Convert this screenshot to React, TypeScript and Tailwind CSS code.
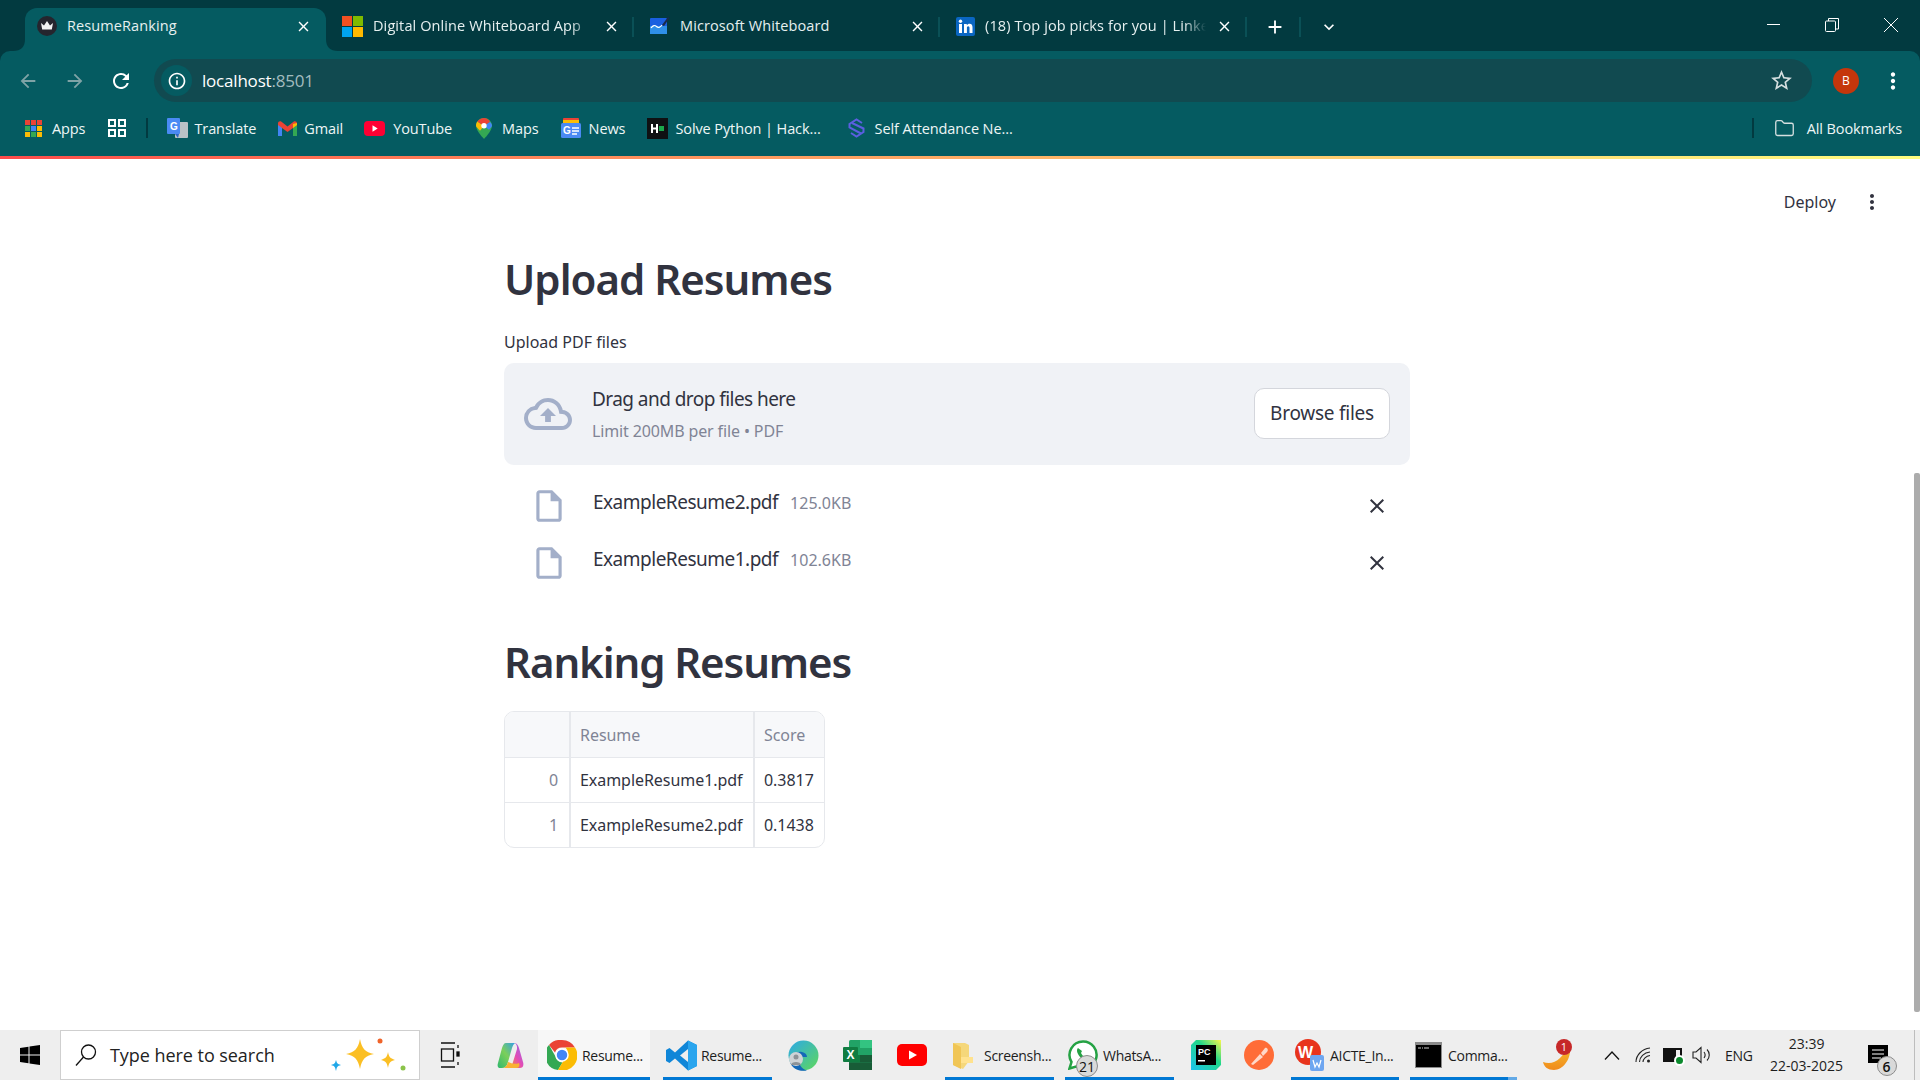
import React from "react";
import { MdArrowBack, MdArrowForward, MdRefresh, MdInfoOutline, MdStarBorder, MdMoreVert, MdClose, MdOutlineCloudUpload, MdOutlineInsertDriveFile, MdAdd, MdKeyboardArrowDown } from "react-icons/md";
import { Folder } from "lucide-react";

const UI = "font-['Open_Sans','Noto_Sans',sans-serif]";
const SS = "font-['Noto_Sans','Open_Sans',sans-serif]";

const Crown = () => (
  <svg width="20" height="20" viewBox="0 0 20 20" className="shrink-0">
    <circle cx="10" cy="10" r="10" fill="#25252e" />
    <path d="M4 7l3 2.500L10 5l3 4.500L16 7l-1.200 6.500H5.200z" fill="#f3f3f3" />
  </svg>
);
const MsLogo = () => (
  <svg width="21" height="21" viewBox="0 0 21 21" className="shrink-0">
    <rect width="10" height="10" fill="#f25022" />
    <rect x="11" width="10" height="10" fill="#7fba00" />
    <rect y="11" width="10" height="10" fill="#00a4ef" />
    <rect x="11" y="11" width="10" height="10" fill="#ffb900" />
  </svg>
);
const Whiteboard = () => (
  <svg width="20" height="20" viewBox="0 0 20 20" className="shrink-0">
    <rect y="2" width="17" height="16" rx="1" fill="#1a5fe0" />
    <rect y="10" width="17" height="8" fill="#2f8fe8" />
    <path d="M1 12c2-3 4-3 5.500-1.500S10 12 12 9" stroke="#fff" strokeWidth="1.200" fill="none" />
    <path d="M12 9l6-8 1.500 1-5.500 8z" fill="#1b2a4a" />
  </svg>
);
const LinkedIn = () => (
  <svg width="19" height="19" viewBox="0 0 19 19" className="shrink-0">
    <rect width="19" height="19" rx="2" fill="#0a66c2" />
    <rect x="3" y="7" width="3" height="9" fill="#fff" />
    <circle cx="4.500" cy="4.300" r="1.700" fill="#fff" />
    <path d="M8 7h2.800v1.300C11.400 7.400 12.400 6.800 13.500 6.800c2.300 0 3 1.500 3 3.600V16h-3v-5c0-1.100-.4-1.800-1.300-1.800-1 0-1.300.8-1.300 1.800v5H8z" fill="#fff" />
  </svg>
);

const Tab = ({ icon, title, fade, active, width }: { icon: React.ReactNode; title: string; fade?: boolean; active?: boolean; width?: string }) => (
  <div className={active ? "relative flex h-[43px] w-[301px] items-center rounded-t-[12px] bg-[#055b61] pb-[7px] pl-[12px] pr-[14px]" : `flex h-[43px] ${width} items-center pb-[7px] pl-[16px] pr-[12px]`}>
    {active && (
      <>
        <svg width="12" height="12" viewBox="0 0 12 12" className="absolute bottom-0 left-[-12px]"><path d="M12 0v12H0C8 12 12 8 12 0z" fill="#055b61" /></svg>
        <svg width="12" height="12" viewBox="0 0 12 12" className="absolute bottom-0 right-[-12px]"><path d="M0 0v12h12C4 12 0 8 0 0z" fill="#055b61" /></svg>
      </>
    )}
    {icon}
    <div className={fade ? "ml-[10px] flex-1 overflow-hidden whitespace-nowrap text-[14.500px] tracking-[0.1px] text-[#e6f0f0] [mask-image:linear-gradient(to_right,black_90%,transparent)]" : "ml-[10px] flex-1 overflow-hidden whitespace-nowrap text-[14.500px] tracking-[0.1px] text-[#e6f0f0]"}>{title}</div>
    <MdClose className="ml-[10px] shrink-0 text-white" size={17} />
  </div>
);

const Sep = () => <div className="h-[20px] w-[2px] shrink-0 bg-[#0a5056]" />;

const Bm = ({ children }: { children: React.ReactNode }) => <span className="whitespace-nowrap text-[14.500px] tracking-[-0.1px] text-[#eef6f6]">{children}</span>;

const TaskText = ({ children }: { children: React.ReactNode }) => <span className="whitespace-nowrap text-[14px] tracking-[-0.3px] text-[#1d1d1d]">{children}</span>;
const Under = ({ tail }: { tail?: boolean }) => (
  <div className="absolute bottom-0 left-0 right-0 flex h-[3px]">
    <div className="flex-1 bg-[#0078d4]" />
    {tail && <div className="w-[9px] bg-[#63a9e6]" />}
  </div>
);

export default function App() {
  return (
    <div className={`flex h-[1080px] w-[1920px] flex-col overflow-hidden bg-white ${UI}`}>
      {/* tab strip */}
      <div className="flex h-[51px] shrink-0 items-end bg-[#023a40] pl-[25px]">
        <Tab active icon={<Crown />} title="ResumeRanking" />
        <Tab fade width="w-[306px]" icon={<MsLogo />} title="Digital Online Whiteboard App" />
        <div className="mb-[14px]"><Sep /></div>
        <Tab width="w-[304px]" icon={<Whiteboard />} title="Microsoft Whiteboard" />
        <div className="mb-[14px]"><Sep /></div>
        <Tab fade width="w-[305px]" icon={<LinkedIn />} title="(18) Top job picks for you | LinkedIn" />
        <div className="mb-[14px]"><Sep /></div>
        <div className="mb-[14px] ml-[17px] flex h-[20px] items-center"><MdAdd className="text-white" size={22} /></div>
        <div className="mb-[14px] ml-[13px]"><Sep /></div>
        <div className="mb-[14px] ml-[18px] flex h-[20px] items-center"><MdKeyboardArrowDown className="text-white" size={20} /></div>
        <div className="mb-[26px] ml-[428px] h-[1px] w-[13px] bg-white" />
        <svg width="14" height="14" viewBox="0 0 14 14" className="mb-[19px] ml-[45px]" fill="none" stroke="#fff"><rect x="0.500" y="3" width="10" height="10.500" rx="1" /><path d="M3.500 3V0.500h10V11h-3" /></svg>
        <svg width="14" height="14" viewBox="0 0 14 14" className="mb-[19px] ml-[45px]" stroke="#fff"><path d="M0 0l14 14M14 0L0 14" /></svg>
      </div>

      {/* toolbar + bookmarks */}
      <div className="h-[105px] shrink-0 bg-[#023a40]">
        <div className="h-full rounded-t-[10px] bg-[#055b61]">
          <div className="flex pt-[8px]">
            <div className="flex h-[43px] items-center">
              <MdArrowBack className="ml-[17px] text-[#7fa3a6]" size={22} />
              <MdArrowForward className="ml-[25px] text-[#7fa3a6]" size={22} />
              <MdRefresh className="ml-[23px] text-white" size={24} />
              <div className="ml-[21px] flex h-[43px] w-[1658px] items-center rounded-full bg-[#114a50] pl-[7px] pr-[18px]">
                <div className="flex h-[31px] w-[31px] items-center justify-center rounded-full bg-[#055b61]">
                  <MdInfoOutline className="text-white" size={20} />
                </div>
                <span className="ml-[10px] text-[17px] tracking-[-0.2px] text-white">localhost<span className="text-[#a2bcbf]">:8501</span></span>
                <MdStarBorder className="ml-auto text-[#d5dfe0]" size={25} />
              </div>
              <div className="ml-[21px] flex h-[26px] w-[26px] items-center justify-center rounded-full bg-[#c5360b] text-[12px] text-white">B</div>
              <MdMoreVert className="ml-[21px] text-white" size={26} />
            </div>
          </div>
          <div className="mt-[1px] flex h-[50px] items-center pl-[25px] pr-[18px]">
            <svg width="17" height="17" viewBox="0 0 17 17" className="shrink-0">
              {[["#ea4335","#ea4335","#ea4335"],["#34a853","#4285f4","#fbbc04"],["#fbbc04","#34a853","#fbbc04"]].map((r, y) => r.map((c, x) => <rect key={`${x}${y}`} x={x * 6} y={y * 6} width="5" height="5" fill={c} />))}
            </svg>
            <div className="ml-[10px]"><Bm>Apps</Bm></div>
            <svg width="18" height="18" viewBox="0 0 18 18" className="ml-[23px] shrink-0" fill="none" stroke="#fff" strokeWidth="2"><rect x="1" y="1" width="6" height="6" /><rect x="11" y="1" width="6" height="6" /><rect x="1" y="11" width="6" height="6" /><rect x="11" y="11" width="6" height="6" /></svg>
            <div className="ml-[20px] h-[20px] w-[2px] bg-[#023a40]" />
            <svg width="21" height="21" viewBox="0 0 21 21" className="ml-[19px] shrink-0">
              <rect x="8" y="4" width="13" height="16" rx="1" fill="#b9c2c6" />
              <rect width="13" height="16" rx="1" fill="#4a8af4" />
              <path d="M8 16l3 4 1-4z" fill="#2f65c4" />
              <text x="3" y="12" fontSize="10" fontWeight="700" fill="#fff" fontFamily="Liberation Sans">G</text>
            </svg>
            <div className="ml-[6px]"><Bm>Translate</Bm></div>
            <svg width="19" height="15" viewBox="0 0 19 15" className="ml-[22px] shrink-0">
              <path d="M0 3v12h4V6z" fill="#4285f4" /><path d="M19 3v12h-4V6z" fill="#34a853" />
              <path d="M0 2.500C0 .5 2 -.3 3.500 .8L9.500 5.500 15.500 .8C17 -.3 19 .5 19 2.500V4l-4 3-5.500 4L4 7 0 4z" fill="#ea4335" />
              <path d="M15 3l4-1V4l-4 3z" fill="#fbbc04" />
            </svg>
            <div className="ml-[7px]"><Bm>Gmail</Bm></div>
            <svg width="21" height="15" viewBox="0 0 21 15" className="ml-[21px] shrink-0"><rect width="21" height="15" rx="4" fill="#ff0033" /><path d="M8.500 4.300l5.200 3.200-5.200 3.200z" fill="#fff" /></svg>
            <div className="ml-[8px]"><Bm>YouTube</Bm></div>
            <svg width="16" height="21" viewBox="0 0 16 21" className="ml-[24px] shrink-0">
              <path d="M8 0C3.600 0 0 3.400 0 7.800 0 13 8 21 8 21s8-8 8-13.200C16 3.400 12.400 0 8 0z" fill="#34a853" />
              <path d="M1.300 3.500L8 8 4 12.800C2 10.500 0 9 0 7.800 0 6 .5 4.700 1.300 3.500z" fill="#fbbc04" />
              <path d="M8 0C5.300 0 3 1.400 1.300 3.500L8 8l6-4C12.800 1.500 10.500 0 8 0z" fill="#ea4335" />
              <path d="M14 4L8 8l5 3.800c1.500-1.700 3-3 3-4C16 6.300 15.300 5 14 4z" fill="#4285f4" />
              <circle cx="8" cy="7.800" r="2.700" fill="#fff" />
            </svg>
            <div className="ml-[10px]"><Bm>Maps</Bm></div>
            <svg width="20" height="20" viewBox="0 0 20 20" className="ml-[22px] shrink-0">
              <rect x="2" y="0" width="16" height="6" rx="1" fill="#ea4335" /><rect x="2" y="2" width="16" height="6" fill="#fbbc04" />
              <rect y="5" width="20" height="15" rx="1.500" fill="#4a8af4" />
              <text x="2" y="16" fontSize="10" fontWeight="700" fill="#fff" fontFamily="Liberation Sans">G</text>
              <path d="M11 10h7M11 13h7M11 16h5" stroke="#fff" strokeWidth="1.300" />
            </svg>
            <div className="ml-[8px]"><Bm>News</Bm></div>
            <svg width="21" height="21" viewBox="0 0 21 21" className="ml-[22px] shrink-0">
              <rect width="21" height="21" fill="#0f1113" />
              <path d="M5 6v9M10 6v9M5 10.500h5" stroke="#fff" strokeWidth="2" />
              <rect x="12" y="8" width="5" height="5" fill="#1ba94c" />
            </svg>
            <div className="ml-[7px]"><Bm>Solve Python | Hack...</Bm></div>
            <svg width="17" height="20" viewBox="0 0 17 20" className="ml-[27px] shrink-0" fill="none" stroke="#5b5fe0" strokeWidth="2">
              <path d="M14 5L8.500 1.500 1.500 6v3.500L13 15.500" /><path d="M3 15l5.500 3.500 7-4.500v-3.500L4 5" />
            </svg>
            <div className="ml-[10px]"><Bm>Self Attendance Ne...</Bm></div>
            <div className="ml-auto h-[20px] w-[2px] bg-[#023a40]" />
            <Folder className="ml-[20px] shrink-0 text-[#d5dfe0]" size={21} strokeWidth={1.500} />
            <div className="ml-[12px]"><Bm>All Bookmarks</Bm></div>
          </div>
        </div>
      </div>
      <div className="h-[3px] shrink-0 bg-gradient-to-r from-[#ff4b4b] to-[#fffd80]" />

      {/* page */}
      <div className={`relative flex-1 ${SS} text-[#31333f]`}>
        <div className="absolute right-0 top-[314px] h-[539px] w-[6px] rounded-[2px] bg-[#acacac]" />
        <div className="flex h-[86px] items-start justify-end pr-[36px] pt-[31px]">
          <span className="text-[16px] leading-[24px] tracking-[0px]">Deploy</span>
          <MdMoreVert className="ml-[24px]" size={24} />
        </div>
        <div className="ml-[504px] w-[906px]">
          <h1 className="h-[68px] pt-[1px] text-[42px] font-semibold leading-[66px] tracking-[-1px]">Upload Resumes</h1>
          <div className="mt-[17px] h-[33px] text-[16px] leading-[24px] tracking-[0px]">Upload PDF files</div>
          <div className="flex h-[102px] items-center rounded-[10px] bg-[#f0f2f6] pl-[20px] pr-[20px]">
            <MdOutlineCloudUpload className="shrink-0 text-[#a3afc9]" size={48} />
            <div className="ml-[20px] pb-[2px]">
              <div className="text-[19px] leading-[30px] tracking-[-0.55px]">Drag and drop files here</div>
              <div className="mt-[5px] text-[16px] leading-[24px] tracking-[-0.13px] text-[#808495]">Limit 200MB per file • PDF</div>
            </div>
            <div className="mb-[2px] ml-auto flex h-[51px] w-[136px] items-center justify-center rounded-[10px] border border-[#d4d6dc] bg-white text-[19px] tracking-[-0.25px]">Browse files</div>
          </div>
          <div className="mt-[12px] flex h-[57px] items-center pl-[26px] pr-[21px]">
            <MdOutlineInsertDriveFile className="shrink-0 text-[#a3afc9]" size={38} />
            <span className="ml-[25px] pb-[6px] text-[19px] tracking-[-0.5px]">ExampleResume2.pdf</span>
            <span className="ml-[12px] pb-[6px] text-[16px] tracking-[0px] text-[#808495]">125.0KB</span>
            <MdClose className="ml-auto shrink-0" size={24} />
          </div>
          <div className="flex h-[57px] items-center pl-[26px] pr-[21px]">
            <MdOutlineInsertDriveFile className="shrink-0 text-[#a3afc9]" size={38} />
            <span className="ml-[25px] pb-[6px] text-[19px] tracking-[-0.5px]">ExampleResume1.pdf</span>
            <span className="ml-[12px] pb-[6px] text-[16px] tracking-[0px] text-[#808495]">102.6KB</span>
            <MdClose className="ml-auto shrink-0" size={24} />
          </div>
          <h1 className="mt-[38px] h-[68px] text-[42px] font-semibold leading-[66px] tracking-[-1.1px]">Ranking Resumes</h1>
          <div className="mt-[14px] w-[321px] overflow-hidden rounded-[10px] border border-[#e6e8ec] text-[16px] tracking-[-0.05px]">
            <div className="grid h-[45px] grid-cols-[64px_184px_71px] bg-[#f7f8fa] text-[#808495]">
              <div />
              <div className="flex items-center border-l-2 border-[#e6e8ec] pl-[9px]">Resume</div>
              <div className="flex items-center border-l-2 border-[#e6e8ec] pl-[9px]">Score</div>
            </div>
            {[["0", "ExampleResume1.pdf", "0.3817"], ["1", "ExampleResume2.pdf", "0.1438"]].map((r) => (
              <div key={r[0]} className="grid h-[45px] grid-cols-[64px_184px_71px] border-t border-[#e6e8ec]">
                <div className="flex items-center justify-end pr-[11px] text-[#808495]">{r[0]}</div>
                <div className="flex items-center whitespace-nowrap border-l-2 border-[#e6e8ec] pl-[9px]">{r[1]}</div>
                <div className="flex items-center border-l-2 border-[#e6e8ec] pl-[9px]">{r[2]}</div>
              </div>
            ))}
          </div>
        </div>
      </div>

      {/* taskbar */}
      <div className="flex h-[50px] shrink-0 items-center bg-[#eeeeee]">
        <svg width="20" height="20" viewBox="0 0 20 20" className="ml-[20px] shrink-0" fill="#000"><path d="M0 3l8.500-1.200V9.500H0zM9.500 1.600L20 0v9.500H9.500zM0 10.500h8.500v7.700L0 17zM9.500 10.500H20V20L9.500 18.400z" /></svg>
        <div className="ml-[20px] flex h-[50px] w-[360px] shrink-0 items-center border border-[#cfcfcf] bg-white pl-[14px]">
          <svg width="22" height="24" viewBox="0 0 22 24" fill="none" stroke="#111" strokeWidth="1.300"><circle cx="13.500" cy="9" r="7" /><path d="M8.500 14L1 22.500" /></svg>
          <span className="ml-[13px] text-[18px] tracking-[-0.05px] text-[#222]">Type here to search</span>
          <svg width="76" height="36" viewBox="0 0 76 36" className="ml-[55px]">
            <path d="M30 2c2 10 5 13 14 15-9 2-12 5-14 15-2-10-5-13-14-15 9-2 12-5 14-15z" fill="#fbbf24" />
            <path d="M58 15c1 5 2 6 7 8-5 1-6 3-7 8-1-5-2-7-7-8 5-2 6-3 7-8z" fill="#fbbf24" />
            <path d="M6 23c1 3 1 4 5 5-4 1-4 2-5 6-1-4-1-5-5-6 4-1 4-2 5-5z" fill="#1fa7e8" />
            <circle cx="50" cy="4" r="2.500" fill="#f0642a" />
            <circle cx="73" cy="31" r="2.500" fill="#8bc34a" />
          </svg>
        </div>
        <svg width="20" height="26" viewBox="0 0 20 26" className="ml-[20px] shrink-0" fill="none" stroke="#111" strokeWidth="1.300"><path d="M1 1h14M1 25h14" /><rect x="1.500" y="7" width="12" height="12" /><path d="M18 3v3M18 20v3" /><rect x="17" y="10" width="2" height="4" fill="#111" /></svg>
        <svg width="27" height="27" viewBox="0 0 27 27" className="ml-[37px] shrink-0">
          <defs>
            <linearGradient id="cp1" x1="0" y1="1" x2="1" y2="0"><stop offset="0" stopColor="#2fb86e" /><stop offset="0.5" stopColor="#7ccf5a" /><stop offset="1" stopColor="#2f9df0" /></linearGradient>
            <linearGradient id="cp2" x1="0" y1="1" x2="1" y2="0"><stop offset="0" stopColor="#f5a020" /><stop offset="0.5" stopColor="#e44bb5" /><stop offset="1" stopColor="#8a6cf0" /></linearGradient>
          </defs>
          <path d="M9 1h10c-2 0-3 2-4 5l-4 14c-1 4-3 6-6 6H3c-2 0-3-2-2-5L5 6C6 3 7 1 9 1z" fill="url(#cp1)" />
          <path d="M17 1c3 0 4 2 5 5l4 14c1 3 0 6-3 6H11c2 0 4-2 5-6l4-13c.5-3-1-6-3-6z" fill="url(#cp2)" />
          <path d="M5 26h14c3 0 4-2 3-5-4 2-8 0-11-1-1 4-3 6-6 6z" fill="#f9b233" />
        </svg>

        <div className="relative ml-[14px] flex h-[50px] w-[112px] shrink-0 items-center bg-[#f7f7f7] pl-[9px]">
          <svg width="30" height="30" viewBox="0 0 30 30" className="shrink-0">
            <path d="M15 0a15 15 0 0 1 13 7.500H15a7.500 7.500 0 0 0-7 5L2 5A15 15 0 0 1 15 0z" fill="#ea4335" />
            <path d="M2 5l6.500 11.500a7.500 7.500 0 0 0 7 6L11 30A15 15 0 0 1 2 5z" fill="#34a853" />
            <path d="M28 7.500A15 15 0 0 1 11 30l6.500-11a7.500 7.500 0 0 0 1-11.500z" fill="#fbbc04" />
            <circle cx="15" cy="15" r="6" fill="#4285f4" stroke="#fff" strokeWidth="1.500" />
          </svg>
          <div className="ml-[5px]"><TaskText>Resume...</TaskText></div>
          <Under />
        </div>
        <div className="relative ml-[13px] flex h-[50px] w-[109px] shrink-0 items-center pl-[3px]">
          <svg width="31" height="31" viewBox="0 0 31 31" className="shrink-0">
            <path d="M22 .5L31 5v21l-9 4.500L9 18.500 3.500 23 0 21V10l3.500-2L9 12.500z" fill="#0f86d8" />
            <path d="M22 .5L31 5v21l-9 4.500z" fill="#2aa5ee" />
            <path d="M22 9v13l-8-6.500z" fill="#eeeeee" />
          </svg>
          <div className="ml-[4px]"><TaskText>Resume...</TaskText></div>
          <Under />
        </div>
        <svg width="31" height="31" viewBox="0 0 31 31" className="ml-[16px] shrink-0">
          <defs><linearGradient id="ed" x1="0" y1="0" x2="1" y2="1"><stop offset="0" stopColor="#2ca9e8" /><stop offset="1" stopColor="#5fd85a" /></linearGradient></defs>
          <circle cx="15.500" cy="15.500" r="15" fill="url(#ed)" />
          <path d="M2 22c0-7 6-11 12-10 3 .5 5 2.500 5 5h-8c-2 3 1 12 8 13.500-8 1.500-15-2-17-8.500z" fill="#1468b8" />
          <circle cx="8" cy="19" r="7" fill="#cfd3d6" />
          <circle cx="8" cy="17" r="2.500" fill="#8d9297" /><path d="M3 25c0-4 10-4 10 0z" fill="#8d9297" />
        </svg>
        <svg width="29" height="30" viewBox="0 0 29 30" className="ml-[24px] shrink-0">
          <rect x="6" y="0" width="23" height="30" rx="1.500" fill="#21a366" />
          <rect x="17" y="0" width="12" height="8" fill="#33c481" />
          <rect x="6" y="15" width="11" height="7.500" fill="#107c41" /><rect x="17" y="15" width="12" height="7.500" fill="#185c37" />
          <rect x="6" y="22.500" width="23" height="7.500" fill="#185c37" />
          <rect y="7" width="15" height="15" rx="1" fill="#107c41" />
          <text x="3.500" y="19" fontSize="12" fontWeight="700" fill="#fff" fontFamily="Liberation Sans">X</text>
        </svg>
        <svg width="30" height="22" viewBox="0 0 30 22" className="ml-[25px] shrink-0"><rect width="30" height="22" rx="5" fill="#f00" /><path d="M12 6.500l8 4.500-8 4.500z" fill="#fff" /></svg>
        <div className="relative ml-[18px] flex h-[50px] w-[109px] shrink-0 items-center pl-[8px]">
          <svg width="20" height="28" viewBox="0 0 20 28" className="shrink-0">
            <path d="M0 2h12l4 2v16l-6 8-10-4z" fill="#f5d77a" />
            <path d="M8 16h12v6H8z" fill="#ffe28e" />
            <path d="M0 2l8 4v22L0 24z" fill="#f0c555" />
          </svg>
          <div className="ml-[11px]"><TaskText>Screensh...</TaskText></div>
          <Under />
        </div>
        <div className="relative ml-[11px] flex h-[50px] w-[109px] shrink-0 items-center pl-[3px]">
          <div className="relative h-[30px] w-[30px] shrink-0">
            <svg width="30" height="30" viewBox="0 0 30 30">
              <path d="M15 1.500A13.500 13.500 0 0 0 3.500 22L1.500 28.500 8 26.500A13.500 13.500 0 1 0 15 1.500z" fill="#fff" stroke="#25a244" strokeWidth="2.500" />
              <path d="M10 8c-2 2-1 6 3 10s7 4 9 2l-3-4-2 1c-2-1-3-2-4-4l1-2z" fill="#25a244" />
            </svg>
            <div className="absolute left-[8px] top-[15px] flex h-[22px] w-[22px] items-center justify-center rounded-full border border-[#8c8c8c] bg-[#d9d9d9] text-[14px] text-[#111]">21</div>
          </div>
          <div className="ml-[5px]"><TaskText>WhatsA...</TaskText></div>
          <Under />
        </div>
        <svg width="30" height="30" viewBox="0 0 30 30" className="ml-[17px] shrink-0">
          <defs><linearGradient id="pc" x1="0" y1="1" x2="1" y2="0"><stop offset="0" stopColor="#1cc3ee" /><stop offset="0.6" stopColor="#21d789" /><stop offset="1" stopColor="#fcf84a" /></linearGradient></defs>
          <path d="M5 0h25v25l-5 5H0V5z" fill="url(#pc)" />
          <rect x="5" y="5" width="20" height="20" fill="#000" />
          <text x="7" y="15" fontSize="9" fontWeight="700" fill="#fff" fontFamily="Liberation Sans">PC</text>
          <rect x="7" y="20" width="7" height="1.500" fill="#fff" />
        </svg>
        <svg width="30" height="30" viewBox="0 0 30 30" className="ml-[23px] shrink-0">
          <circle cx="15" cy="15" r="15" fill="#ff6c37" />
          <path d="M7 24l9-10 3 3-10 8zM17 13l4-5c2-1 4 2 2 4l-4 4z" fill="#ffd8c8" />
        </svg>
        <div className="relative ml-[17px] flex h-[50px] w-[108px] shrink-0 items-center pl-[4px]">
          <svg width="31" height="32" viewBox="0 0 31 32" className="shrink-0">
            <circle cx="13" cy="13" r="13" fill="#e8341c" />
            <text x="3" y="19" fontSize="16" fontWeight="700" fill="#fff" fontFamily="Liberation Sans">W</text>
            <rect x="15" y="16" width="14" height="16" rx="2" fill="#6ea6f0" />
            <path d="M18 21l2 7 2-4 2 4 2-7" stroke="#fff" fill="none" strokeWidth="1.200" />
          </svg>
          <div className="ml-[4px]"><TaskText>AICTE_In...</TaskText></div>
          <Under />
        </div>
        <div className="relative ml-[11px] flex h-[50px] w-[107px] shrink-0 items-center pl-[5px]">
          <svg width="27" height="26" viewBox="0 0 27 26" className="shrink-0">
            <rect width="27" height="26" fill="#8a8a8a" /><rect x="1" y="3" width="25" height="22" fill="#000" />
            <path d="M3 6h3M7 6h1M9 6h5" stroke="#ccc" strokeWidth="1" />
          </svg>
          <div className="ml-[6px]"><TaskText>Comma...</TaskText></div>
          <Under tail />
        </div>
        <div className="relative ml-[26px] h-[32px] w-[28px] shrink-0">
          <svg width="28" height="26" viewBox="0 0 28 26" className="absolute bottom-[1px] left-0">
            <defs><linearGradient id="mn" x1="0" y1="0" x2="0" y2="1"><stop offset="0" stopColor="#f7c32e" /><stop offset="1" stopColor="#f08a1c" /></linearGradient></defs>
            <path d="M27 0c2 14-6 26-16 26C5 26 1 23 0 18c6 2 12 1 17-4 4-4 8-9 10-14z" fill="url(#mn)" />
          </svg>
          <div className="absolute right-[-1px] top-0 flex h-[16px] w-[16px] items-center justify-center rounded-full bg-[#c62828] text-[11px] text-white">1</div>
        </div>
        <svg width="16" height="9" viewBox="0 0 16 9" className="ml-[33px] shrink-0" fill="none" stroke="#111" strokeWidth="1.300"><path d="M1 8.500l7-7.500 7 7.500" /></svg>
        <svg width="16" height="16" viewBox="0 0 16 16" className="ml-[15px] shrink-0" fill="none" stroke="#222" strokeWidth="1.100"><path d="M1 15C1 8 7 2 15 1M4.500 15C4.500 10 9 5.500 15 5M8 15c0-3 3-6 7-6.500" /><circle cx="13.500" cy="14" r="1.500" fill="#222" stroke="none" /></svg>
        <div className="relative ml-[12px] h-[14px] w-[19px] shrink-0 border-2 border-[#111]">
          <div className="h-full w-[11px] bg-[#111]" />
          <div className="absolute bottom-[-6px] right-[-5px] h-[11px] w-[11px] rounded-full border-2 border-white bg-[#0b8a2d]" />
        </div>
        <svg width="20" height="18" viewBox="0 0 20 18" className="ml-[10px] shrink-0" fill="none" stroke="#222" strokeWidth="1.100"><path d="M1 6h3l5-4.500v15L4 12H1zM12 6c1.500 2 1.500 4 0 6M15 3.500c3 3 3 8 0 11" /></svg>
        <span className="ml-[13px] text-[14px] tracking-[-0.3px] text-[#1d1d1d]">ENG</span>
        <div className="ml-[15px] flex w-[78px] shrink-0 flex-col items-center text-[14px] leading-[22px] tracking-[0px] text-[#1d1d1d]">
          <span>23:39</span>
          <span className="whitespace-nowrap">22-03-2025</span>
        </div>
        <div className="relative ml-[22px] h-[20px] w-[20px] shrink-0">
          <svg width="20" height="20" viewBox="0 0 20 20"><rect width="20" height="18" fill="#000" /><path d="M4 5h12M4 9h12M4 13h9" stroke="#fff" strokeWidth="1" /></svg>
          <div className="absolute left-[9px] top-[11px] flex h-[20px] w-[20px] items-center justify-center rounded-full border border-[#8c8c8c] bg-[#d9d9d9] text-[14px] font-semibold text-[#111]">6</div>
        </div>
        <div className="ml-[26px] h-full w-[1px] shrink-0 bg-[#bdbdbd]" />
      </div>
    </div>
  );
}
